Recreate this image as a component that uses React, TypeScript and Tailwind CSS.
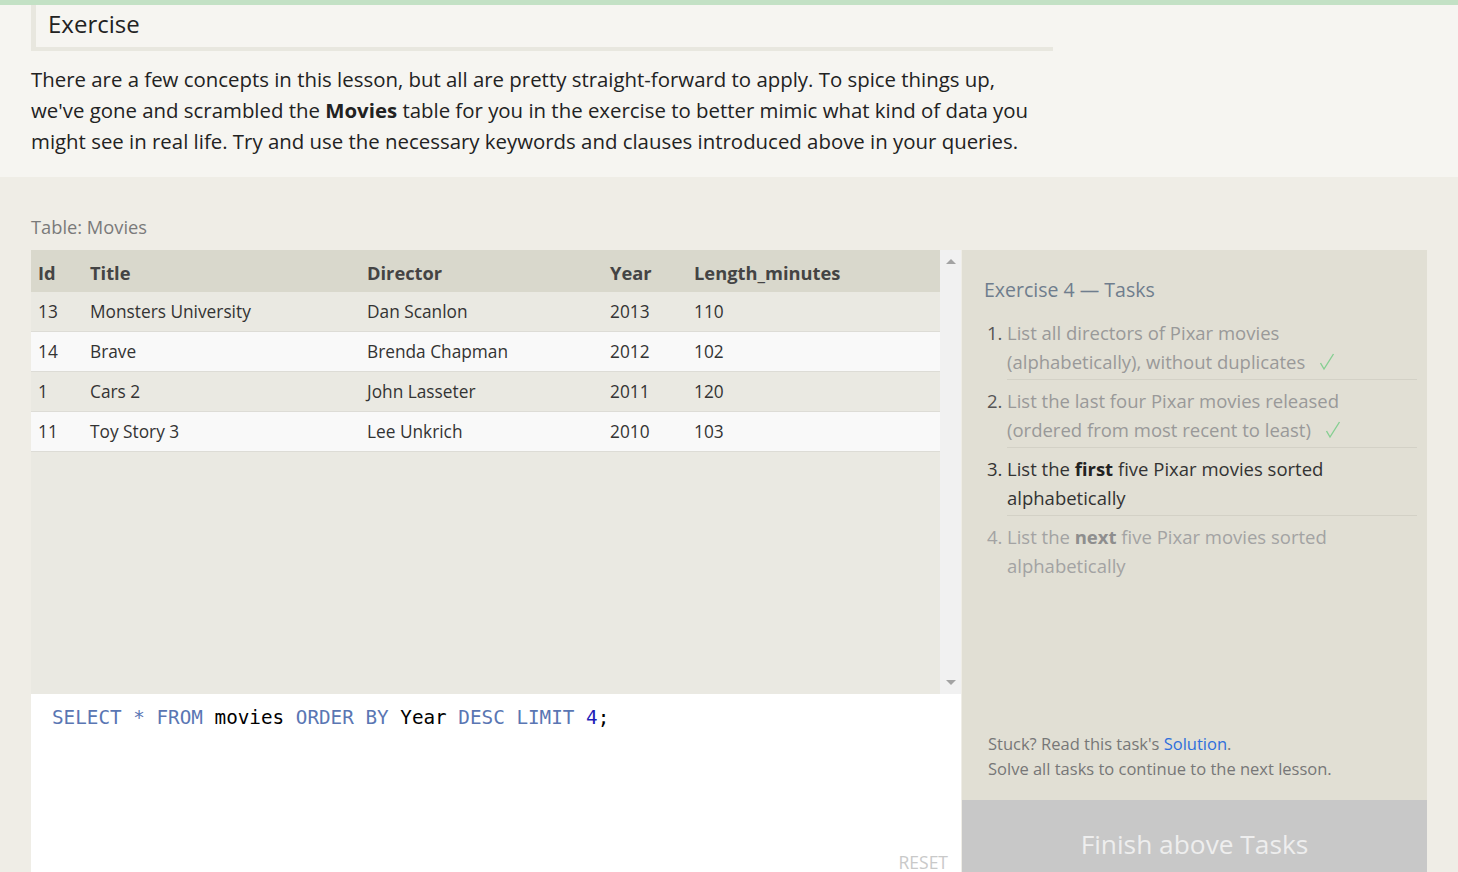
import type { ReactNode } from 'react'

type Row = { id: number; title: string; director: string; year: number; length: number }

const rows: Row[] = [
  { id: 13, title: 'Monsters University', director: 'Dan Scanlon', year: 2013, length: 110 },
  { id: 14, title: 'Brave', director: 'Brenda Chapman', year: 2012, length: 102 },
  { id: 1, title: 'Cars 2', director: 'John Lasseter', year: 2011, length: 120 },
  { id: 11, title: 'Toy Story 3', director: 'Lee Unkrich', year: 2010, length: 103 },
]

const cols = 'grid grid-cols-[52px_277px_243px_84px_1fr]'

function Check() {
  return (
    <svg width="16" height="18" viewBox="0 0 16 18" className="ml-[14px] inline-block align-[-2px]">
      <polyline points="1.5,10 5,16 14.5,1" fill="none" stroke="#86cf92" strokeWidth="1.4" />
    </svg>
  )
}

interface TaskProps {
  n: number
  state: 'done' | 'current' | 'todo'
  last?: boolean
  children: ReactNode
}

function Task({ n, state, last, children }: TaskProps) {
  const numColor = state === 'todo' ? 'text-[#a3a3a3]' : state === 'current' ? 'text-[#333]' : 'text-[#555]'
  const textColor = state === 'current' ? 'text-[#333]' : state === 'done' ? 'text-[#999]' : 'text-[#a3a3a3]'
  return (
    <li className="flex">
      <span className={`w-[20px] shrink-0 pt-[7px] ${numColor}`}>{n}.</span>
      <div className={`flex-1 pt-[7px] pb-[3px] ${last ? '' : 'border-b border-[#d3d1c6]'} ${textColor}`}>
        {children}
      </div>
    </li>
  )
}

function Scrollbar() {
  return (
    <div className="w-[21px] shrink-0 bg-[#f1f1f1] flex flex-col items-center justify-between py-[9px]">
      <div className="w-0 h-0 border-x-[5px] border-x-transparent border-b-[5px] border-b-[#a3a3a3]" />
      <div className="w-0 h-0 border-x-[5px] border-x-transparent border-t-[5px] border-t-[#a3a3a3]" />
    </div>
  )
}

export default function App() {
  return (
    <div className="h-[872px] overflow-hidden bg-[#efede6] font-['Open_Sans',sans-serif] text-[#222]">
      <div className="h-[5px] bg-[#c3e1c5]" />

      {/* lesson intro */}
      <section className="bg-[#f6f5f1] pl-[31px] pb-[20px]">
        <div className="w-[1022px]">
          <h2 className="h-[46px] border-l-[5px] border-b-[4px] border-[#e8e7df] pl-[12px] text-[24px] leading-[38px] text-[#222]">
            Exercise
          </h2>
          <p className="mt-[13px] w-[1012px] text-[20.4px] leading-[31px] text-[#222]">
            There are a few concepts in this lesson, but all are pretty straight-forward to apply. To spice things up,
            we've gone and scrambled the <b>Movies</b> table for you in the exercise to better mimic what kind of data
            you might see in real life. Try and use the necessary keywords and clauses introduced above in your queries.
          </p>
        </div>
      </section>

      <main className="pl-[31px] pt-[38px]">
        <div className="text-[18.3px] leading-[24px] text-[#7a7a7a]">Table: Movies</div>

        <div className="mt-[11px] flex">
          {/* table + editor */}
          <div className="w-[930px] flex flex-col">
            <div className="h-[444px] flex bg-[#eae9e2]">
              <div className="flex-1 text-[17.3px] text-[#333]">
                <div className={`${cols} h-[42px] items-center pt-[3px] bg-[#d9d8cc] text-[18.3px] font-bold text-[#444]`}>
                  <span className="pl-[7px]">Id</span>
                  <span className="pl-[7px]">Title</span>
                  <span className="pl-[7px]">Director</span>
                  <span className="pl-[7px]">Year</span>
                  <span className="pl-[7px]">Length_minutes</span>
                </div>
                {rows.map((r, i) => (
                  <div
                    key={r.id}
                    className={`${cols} h-[40px] items-center pt-[1px] border-b border-[#dddcd6] ${
                      i % 2 === 0 ? 'bg-[#eae9e2]' : 'bg-[#f9f9f9]'
                    }`}
                  >
                    <span className="pl-[7px]">{r.id}</span>
                    <span className="pl-[7px]">{r.title}</span>
                    <span className="pl-[7px]">{r.director}</span>
                    <span className="pl-[7px]">{r.year}</span>
                    <span className="pl-[7px]">{r.length}</span>
                  </div>
                ))}
              </div>
              <Scrollbar />
            </div>

            <div className="relative h-[190px] bg-white pl-[21px] pt-[12px]">
              <pre className="font-['DejaVu_Sans_Mono',monospace] text-[19.3px] leading-[24px] text-black">
                <span className="text-[#5a76b3]">SELECT</span> <span className="text-[#5a76b3]">*</span>{' '}
                <span className="text-[#5a76b3]">FROM</span> movies <span className="text-[#5a76b3]">ORDER</span>{' '}
                <span className="text-[#5a76b3]">BY</span> Year <span className="text-[#5a76b3]">DESC</span>{' '}
                <span className="text-[#5a76b3]">LIMIT</span> <span className="text-[#1d1db8]">4</span>;
              </pre>
              <span className="absolute right-[13px] top-[158px] text-[17.5px] leading-[20px] text-[#c9c9c9]">RESET</span>
            </div>
          </div>

          {/* tasks */}
          <div className="ml-[1px] w-[465px] flex flex-col">
            <div className="h-[550px] bg-[#e1dfd4] pl-[22px] pr-[10px] pt-[26px] flex flex-col">
              <h3 className="text-[19.5px] leading-[28px] text-[#6f7d8d]">Exercise 4 — Tasks</h3>
              <ol className="mt-[8px] pl-[3px] text-[18.5px] leading-[28.5px]">
                <Task n={1} state="done">
                  List all directors of Pixar movies (alphabetically), without duplicates
                  <Check />
                </Task>
                <Task n={2} state="done">
                  List the last four Pixar movies released (ordered from most recent to least)
                  <Check />
                </Task>
                <Task n={3} state="current">
                  List the <b className="text-[#222]">first</b> five Pixar movies sorted alphabetically
                </Task>
                <Task n={4} state="todo" last>
                  List the <b className="text-[#8e8e8e]">next</b> five Pixar movies sorted alphabetically
                </Task>
              </ol>
              <div className="mt-auto mb-[19px] pl-[4px] text-[16.5px] leading-[25px] text-[#777]">
                <p>
                  Stuck? Read this task's <span className="text-[#2f6fdc]">Solution</span>.
                </p>
                <p>Solve all tasks to continue to the next lesson.</p>
              </div>
            </div>
            <div className="h-[90px] bg-[#c8c8c8] pt-[29px] text-center text-[26.3px] leading-[30px] text-[#eeeeee]">
              Finish above Tasks
            </div>
          </div>
        </div>
      </main>
    </div>
  )
}
